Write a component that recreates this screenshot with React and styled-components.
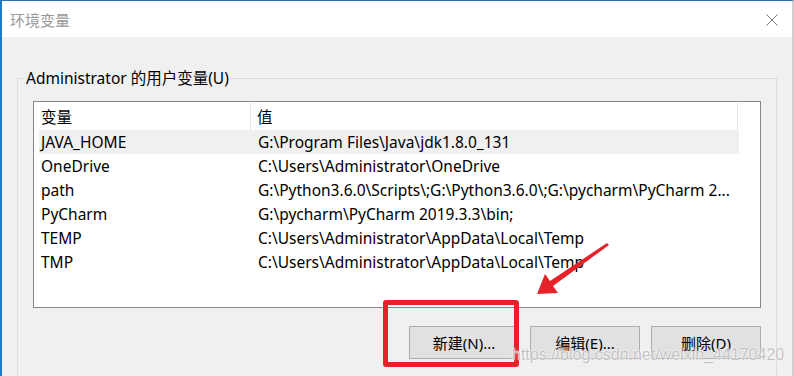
import React from 'react';
import styled, { createGlobalStyle } from 'styled-components';

const GlobalStyle = createGlobalStyle`
    html, body {
        margin: 0;
        padding: 0;
        overflow: hidden;
    }
    body {
        font-family: "Noto Sans", "Noto Sans CJK SC", sans-serif;
        font-size: 15.5px;
        color: #000;
    }
`

const rows = [
    { name: 'JAVA_HOME', value: 'G:\\Program Files\\Java\\jdk1.8.0_131', selected: true },
    { name: 'OneDrive', value: 'C:\\Users\\Administrator\\OneDrive' },
    { name: 'path', value: 'G:\\Python3.6.0\\Scripts\\;G:\\Python3.6.0\\;G:\\pycharm\\PyCharm 2...' },
    { name: 'PyCharm', value: 'G:\\pycharm\\PyCharm 2019.3.3\\bin;' },
    { name: 'TEMP', value: 'C:\\Users\\Administrator\\AppData\\Local\\Temp' },
    { name: 'TMP', value: 'C:\\Users\\Administrator\\AppData\\Local\\Temp' },
];

const buttons = ['新建(N)...', '编辑(E)...', '删除(D)'];

const App = () => {
  return (
    <>
    <GlobalStyle />
    <Window>
        <TitleBar>
            <span className='title'>环境变量</span>
            <svg className='close' width="12" height="12" viewBox="0 0 12 12">
                <path d="M0.5 0.5 L11.5 11.5 M11.5 0.5 L0.5 11.5" stroke="#777" strokeWidth="1" fill="none" />
            </svg>
        </TitleBar>
        <Body>
            <Group>
                <legend>Administrator 的用户变量(U)</legend>
                <ListBox>
                    <Header>
                        <div>变量</div>
                        <div>值</div>
                        <div />
                    </Header>
                    {rows.map(r => (
                        <Row key={r.name} selected={r.selected}>
                            <div>{r.name}</div>
                            <div>{r.value}</div>
                        </Row>
                    ))}
                </ListBox>
                <ButtonRow>
                    {buttons.map(b => <Button key={b}>{b}</Button>)}
                </ButtonRow>
            </Group>
        </Body>

        <Highlight />
        <svg className='arrow' width="794" height="376" viewBox="0 0 794 376">
            <polygon
                points="537,294 545,274 550,281 607,243 609,245 553,286 558,293"
                fill="#e52229"
            />
        </svg>
        <Watermark>https://blog.csdn.net/weixin_44170420</Watermark>
    </Window>
    </>
  )
}

const Window = styled.div`
    position: relative;
    width: 794px;
    height: 376px;
    box-sizing: border-box;
    border-top: 1px solid #2a6cb0;
    border-left: 2px solid #1f7cc0;
    border-right: 2px solid #cfcfcf;
    display: flex;
    flex-direction: column;
    overflow: hidden;
    background: #f0f0f0;
    .arrow{
        position: absolute;
        left: -2px;
        top: -1px;
        pointer-events: none;
    }
`

const TitleBar = styled.div`
    height: 36px;
    flex-shrink: 0;
    background: #fff;
    display: flex;
    align-items: center;
    justify-content: space-between;
    padding: 0 14px 0 8px;
    .title{
        color: #999;
        font-size: 15px;
        margin-top: 1px;
    }
    .close{
        margin-top: 1px;
    }
`

const Body = styled.div`
    flex: 1;
    padding: 31px 15px 0 15px;
`

const Group = styled.fieldset`
    margin: 0;
    padding: 13px 15px 20px 15px;
    border: 1px solid #dcdcdc;
    legend{
        padding: 0 2px;
        margin-left: -9px;
        line-height: 20px;
    }
`

const ListBox = styled.div`
    height: 205px;
    border: 1px solid #828790;
    background: #fff;
`

const Header = styled.div`
    display: grid;
    grid-template-columns: 217px 487px 1fr;
    height: 27px;
    padding-top: 1px;
    div{
        display: flex;
        align-items: center;
        border-right: 1px solid #e5e5e5;
        padding-left: 7px;
    }
    div:nth-child(2){
        padding-left: 6px;
    }
    div:last-child{
        border-right: none;
    }
`

const Row = styled.div`
    display: grid;
    grid-template-columns: 212px 488px;
    width: 700px;
    height: 24px;
    margin-left: 5px;
    background: ${({selected}) => selected ? '#f0f0f0' : 'transparent'};
    div{
        display: flex;
        align-items: center;
        padding-left: 2px;
        white-space: nowrap;
        overflow: hidden;
    }
    div:last-child{
        padding-left: 7px;
    }
`

const ButtonRow = styled.div`
    display: flex;
    justify-content: flex-end;
    gap: 11px;
    margin-top: 18px;
`

const Button = styled.div`
    width: 108px;
    height: 31px;
    border: 1px solid #adadad;
    background: #e1e1e1;
    display: flex;
    align-items: center;
    justify-content: center;
    font-size: 15px;
`

const Highlight = styled.div`
    position: absolute;
    left: 381px;
    top: 299px;
    width: 126px;
    height: 57px;
    border: 5px solid #e8202a;
    border-radius: 3px;
`

const Watermark = styled.div`
    position: absolute;
    left: 510px;
    top: 345px;
    font-family: "Liberation Sans", Arial, sans-serif;
    font-size: 16px;
    color: rgba(175, 175, 175, 0.75);
    text-shadow: 0 0 1px #fff, 0 0 2px #fff;
    white-space: nowrap;
    pointer-events: none;
`

export default App
